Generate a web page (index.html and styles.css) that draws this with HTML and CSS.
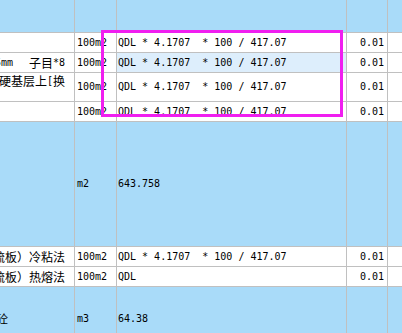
FILE: index.html
```html
<!DOCTYPE html>
<html>
<head>
<meta charset="utf-8">
<link rel="stylesheet" href="styles.css">
</head>
<body>
<div class="sheet">
  <div class="grid">
    <!-- header -->
    <div class="c b"></div><div class="c b"></div><div class="c b"></div><div class="c b"></div><div class="c b"></div>
    <!-- row 1 -->
    <div class="c w n"></div>
    <div class="c w u">100m2</div>
    <div class="c w f">QDL * 4.1707&nbsp; * 100 / 417.07</div>
    <div class="c w q">0.01</div>
    <div class="c w"></div>
    <!-- row 2 -->
    <div class="c w n">5mm<span class="cj gap">子目</span>*8</div>
    <div class="c w u">100m2</div>
    <div class="c h f">QDL * 4.1707&nbsp; * 100 / 417.07</div>
    <div class="c w q">0.01</div>
    <div class="c w"></div>
    <!-- row 3 -->
    <div class="c w n top"><span class="cj">硬基层上</span>[<span class="cj">换</span></div>
    <div class="c w u">100m2</div>
    <div class="c w f">QDL * 4.1707&nbsp; * 100 / 417.07</div>
    <div class="c w q">0.01</div>
    <div class="c w"></div>
    <!-- row 4 -->
    <div class="c w n"></div>
    <div class="c w u">100m2</div>
    <div class="c w f">QDL * 4.1707&nbsp; * 100 / 417.07</div>
    <div class="c w q">0.01</div>
    <div class="c w"></div>
    <!-- big row -->
    <div class="c b"></div>
    <div class="c b u">m2</div>
    <div class="c b f">643.758</div>
    <div class="c b"></div>
    <div class="c b"></div>
    <!-- row 6 -->
    <div class="c w n"><span class="cj">琉板）冷粘法</span></div>
    <div class="c w u">100m2</div>
    <div class="c w f">QDL * 4.1707&nbsp; * 100 / 417.07</div>
    <div class="c w q">0.01</div>
    <div class="c w"></div>
    <!-- row 7 -->
    <div class="c w n"><span class="cj">琉板）热熔法</span></div>
    <div class="c w u">100m2</div>
    <div class="c w f">QDL</div>
    <div class="c w q">0.01</div>
    <div class="c w"></div>
    <!-- last row -->
    <div class="c b"><span class="cj lead">砼</span></div>
    <div class="c b u">m3</div>
    <div class="c b f">64.38</div>
    <div class="c b"></div>
    <div class="c b"></div>
  </div>
  <div class="mark"></div>
</div>
</body>
</html>
```

FILE: styles.css
```css
html, body {
  margin: 0;
  padding: 0;
  overflow: hidden;
  background: #a9dbf9;
}
.sheet {
  position: relative;
  width: 402px;
  height: 333px;
  overflow: hidden;
}
.grid {
  display: grid;
  grid-template-columns: 74px 41px 229px 40px 1fr;
  grid-template-rows: 32px 19px 19px 28px 19px 124px 19px 19px 63px;
  gap: 1px;
  background: #c0c0c0;
  font-family: "DejaVu Sans Mono", "Liberation Mono", monospace;
  font-size: 10px;
  color: #000;
}
.c {
  display: flex;
  align-items: center;
  overflow: hidden;
  white-space: nowrap;
  line-height: 12px;
}
.b { background: #a9dbf9; }
.w { background: #ffffff; }
.h { background: #ddeefc; }
.u { padding-left: 2px; }
.f { padding-left: 1px; }
.q { justify-content: flex-end; padding-right: 3px; }
.n { justify-content: flex-end; padding-right: 9px; }
.top { align-items: flex-start; padding-top: 2px; }
.cj {
  font-family: "Noto Sans CJK SC", sans-serif;
  font-size: 12px;
  line-height: 12px;
}
.gap { margin-left: 16px; }
.lead { margin-left: -4px; }
.mark {
  position: absolute;
  left: 101px;
  top: 30px;
  width: 236px;
  height: 81px;
  border: 3px solid #f01ef0;
}
```
